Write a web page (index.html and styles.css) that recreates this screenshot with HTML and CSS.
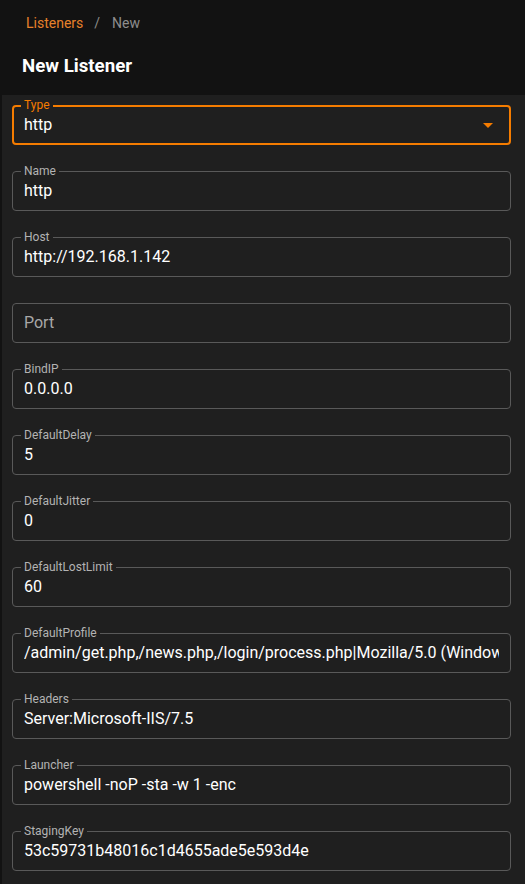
FILE: index.html
```html
<!DOCTYPE html>
<html>
<head>
<meta charset="utf-8">
<link rel="stylesheet" href="styles.css">
</head>
<body>
<div class="page">
  <header class="header">
    <nav class="crumbs">
      <span class="crumb-link">Listeners</span>
      <span class="crumb-sep">/</span>
      <span class="crumb-current">New</span>
    </nav>
    <h1 class="title">New Listener</h1>
  </header>
  <main class="card">
    <div class="field field-focused">
      <span class="field-label">Type</span>
      <span class="field-value">http</span>
      <svg class="arrow" viewBox="0 0 24 24" width="24" height="24"><path d="M7 10l5 5 5-5z"/></svg>
    </div>
    <div class="field"><span class="field-label">Name</span><input class="field-input" value="http"></div>
    <div class="field"><span class="field-label">Host</span><input class="field-input" value="http://192.168.1.142"></div>
    <div class="field"><input class="field-input" placeholder="Port"></div>
    <div class="field"><span class="field-label">BindIP</span><input class="field-input" value="0.0.0.0"></div>
    <div class="field"><span class="field-label">DefaultDelay</span><input class="field-input" value="5"></div>
    <div class="field"><span class="field-label">DefaultJitter</span><input class="field-input" value="0"></div>
    <div class="field"><span class="field-label">DefaultLostLimit</span><input class="field-input" value="60"></div>
    <div class="field"><span class="field-label">DefaultProfile</span><input class="field-input" value="/admin/get.php,/news.php,/login/process.php|Mozilla/5.0 (Windows NT 6.1; WOW64; Trident/7.0; rv:11.0) like Gecko"></div>
    <div class="field"><span class="field-label">Headers</span><input class="field-input" value="Server:Microsoft-IIS/7.5"></div>
    <div class="field"><span class="field-label">Launcher</span><input class="field-input" value="powershell -noP -sta -w 1 -enc"></div>
    <div class="field"><span class="field-label">StagingKey</span><input class="field-input" value="53c59731b48016c1d4655ade5e593d4e"></div>
  </main>
</div>
</body>
</html>
```
FILE: styles.css
```css
html, body {
  margin: 0;
  padding: 0;
  background: #121212;
  font-family: Roboto, "Liberation Sans", sans-serif;
  color: #fff;
  overflow: hidden;
}
.page {
  padding-left: 2px;
}
.header {
  padding: 13px 0 0 0;
  height: 82px;
}
.crumbs {
  display: flex;
  align-items: center;
  margin-left: 24px;
  font-size: 14px;
  line-height: 20px;
}
.crumb-link {
  color: #e7812a;
}
.crumb-sep {
  color: #8a8a8a;
  margin: 0 12px 0 11px;
}
.crumb-current {
  color: #8d8d8d;
}
.title {
  margin: 21px 0 0 20px;
  font-size: 18.7px;
  line-height: 24px;
  font-weight: 700;
  color: #fff;
}
.card {
  background: #1f1f1f;
  padding: 10px 14px 20px 10px;
  display: flex;
  flex-direction: column;
  gap: 26px;
  min-height: 800px;
}
.field {
  position: relative;
  box-sizing: border-box;
  height: 40px;
  border: 1px solid #595959;
  border-radius: 4px;
  padding: 0 11px;
  display: flex;
  align-items: center;
}
.field-focused {
  border: 2px solid #f57c00;
  padding: 0 10px;
}
.field-label {
  position: absolute;
  top: -8px;
  left: 8px;
  padding: 0 3px;
  font-size: 12px;
  line-height: 14px;
  color: #b3b3b3;
  background: #1f1f1f;
}
.field-focused .field-label {
  top: -9px;
  left: 7px;
  color: #f57c00;
}
.field-value {
  flex: 1;
  font-size: 16px;
  line-height: 20px;
}
.field-input {
  flex: 1;
  min-width: 0;
  border: 0;
  outline: 0;
  padding: 0;
  margin: 0;
  background: transparent;
  color: #fff;
  font-family: Roboto, "Liberation Sans", sans-serif;
  font-size: 16px;
  line-height: 20px;
}
.field-input::placeholder {
  color: #a8a8a8;
  opacity: 1;
}
.arrow {
  fill: #f57c00;
  margin-right: -1px;
}
```
